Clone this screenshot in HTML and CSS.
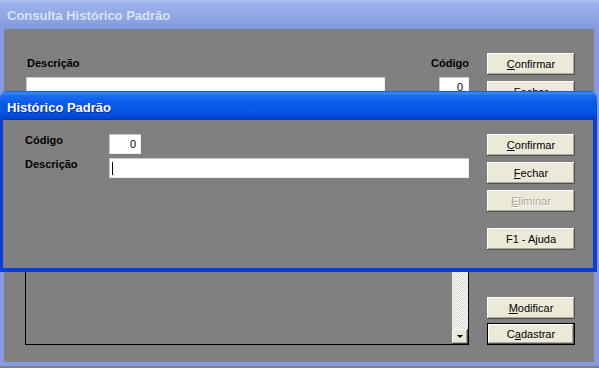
FILE: index.html
```html
<!DOCTYPE html>
<html>
	<head>
		<title>Consulta Histórico Padrão</title>
		<meta charset="utf-8">
		<link rel="stylesheet" href="styles.css">
	</head>

	<body>
		<!-- janela de fundo (inativa) -->
		<div class="window inactive">
			<div class="titlebar"><span>Consulta Histórico Padrão</span></div>
			<div class="client">
				<div class="main-col">
					<div class="label-row">
						<span class="lbl">Descrição</span>
						<span class="lbl">Código</span>
					</div>
					<div class="input-row">
						<div class="field desc-bg"></div>
						<div class="field code-bg">0</div>
					</div>
					<div class="list">
						<div class="scrollbar">
							<div class="scroll-down"><span class="tri"></span></div>
						</div>
					</div>
				</div>
				<div class="btn-col">
					<span class="btn"><u>C</u>onfirmar</span>
					<span class="btn"><u>F</u>echar</span>
					<span class="spacer"></span>
					<span class="btn"><u>M</u>odificar</span>
					<span class="btn default">C<u>a</u>dastrar</span>
				</div>
			</div>
		</div>

		<!-- dialogo ativo por cima -->
		<div class="window dialog">
			<div class="titlebar"><span>Histórico Padrão</span></div>
			<div class="client">
				<div class="form">
					<div class="row">
						<span class="lbl">Código</span>
						<div class="field code-sm">0</div>
					</div>
					<div class="row">
						<span class="lbl">Descrição</span>
						<div class="field desc-lg"><span class="caret"></span></div>
					</div>
				</div>
				<div class="btn-col">
					<span class="btn"><u>C</u>onfirmar</span>
					<span class="btn"><u>F</u>echar</span>
					<span class="btn disabled"><u>E</u>liminar</span>
					<span class="btn help">F1 - Ajuda</span>
				</div>
			</div>
		</div>
	</body>
</html>
```

FILE: styles.css
```css
* {
	box-sizing: border-box;
}

body {
	margin: 0;
	width: 599px;
	height: 368px;
	overflow: hidden;
	position: relative;
	background: #808080;
	font: 11px "Liberation Sans", Arial, sans-serif;
	color: #000;
}

.window {
	display: flex;
	flex-direction: column;
}

.titlebar {
	height: 29px;
	flex: none;
	display: flex;
	align-items: center;
	padding-left: 7px;
	font: bold 13px "Liberation Sans", Arial, sans-serif;
	line-height: 15px;
}

.client {
	flex: 1;
	display: flex;
	background: #808080;
	border-style: solid;
}

/* janela inativa */
.inactive {
	width: 599px;
	height: 366px;
}

.inactive .titlebar {
	padding-top: 2px;
	color: #d8e2f6;
	background: linear-gradient(180deg, #b0c2f2 0%, #9bb1ea 15%, #8fa6e5 60%, #8098dd 100%);
}

.inactive .client {
	border-color: #8799e2;
	border-width: 0 5px 4px 4px;
	padding: 24px 0 0 21px;
}

.main-col {
	width: 444px;
	padding-top: 4px;
	display: flex;
	flex-direction: column;
}

.label-row {
	display: flex;
	justify-content: space-between;
	height: 13px;
	line-height: 13px;
	padding-left: 2px;
}

.lbl {
	font-weight: bold;
	line-height: 13px;
}

.input-row {
	display: flex;
	justify-content: space-between;
	margin-top: 7px;
	padding-left: 1px;
}

.field {
	height: 20px;
	line-height: 20px;
	background: #fff;
	box-shadow: inset 1px 1px #c8c8c8, inset -1px -1px #ececec;
	text-align: right;
	padding-right: 5px;
}

.desc-bg {
	width: 359px;
}

.code-bg {
	width: 30px;
	padding-right: 6px;
}

.list {
	flex: 1;
	margin: 6px 0 17px;
	border: 1px solid #000;
	display: flex;
	justify-content: flex-end;
}

.scrollbar {
	width: 16px;
	display: flex;
	flex-direction: column;
	justify-content: flex-end;
	background: repeating-conic-gradient(#ffffff 0 25%, #d6d3c8 0 50%) 0 0 / 2px 2px;
}

.scroll-down {
	height: 15px;
	background: #ece9d8;
	box-shadow: inset -1px -1px #404040, inset 1px 1px #fff, inset -2px -2px #aca899;
	display: flex;
	align-items: center;
	justify-content: center;
}

.tri {
	width: 0;
	height: 0;
	border-left: 3px solid transparent;
	border-right: 3px solid transparent;
	border-top: 3px solid #000;
}

.btn-col {
	margin-left: 18px;
	display: flex;
	flex-direction: column;
	gap: 6px;
	padding-bottom: 17px;
}

.spacer {
	flex: 1;
}

.btn {
	width: 88px;
	height: 22px;
	line-height: 22px;
	text-align: center;
	background: #ece9d8;
	box-shadow: inset -1px -1px #55534c, inset 1px 1px #fff, inset -2px -2px #aca899;
	cursor: pointer;
}

.btn.default {
	margin-top: -2px;
	border: 1px solid #000;
	line-height: 20px;
}

.btn.disabled {
	color: #aca899;
	text-shadow: 1px 1px #fff;
}

.btn.help {
	margin-top: 10px;
}

/* dialogo ativo */
.dialog {
	position: absolute;
	left: 0;
	top: 91px;
	width: 597px;
	height: 181px;
}

.dialog .titlebar {
	padding-top: 4px;
	border-radius: 7px 7px 0 0;
	color: #fff;
	text-shadow: 1px 1px #0a2a9c;
	background: linear-gradient(180deg, #0a50dc 0%, #3a8cfa 6%, #1a6cf2 16%, #0a5ae8 40%, #0556e6 70%, #0348d6 90%, #0238b8 100%);
}

.dialog .client {
	border-color: #0b3ddc;
	border-width: 0 4px 4px 3px;
	padding: 14px 0 0 22px;
}

.form {
	width: 444px;
	display: flex;
	flex-direction: column;
	gap: 4px;
}

.row {
	display: flex;
}

.row .lbl {
	width: 84px;
}

.code-sm {
	width: 32px;
}

.desc-lg {
	width: 360px;
	text-align: left;
	padding: 4px 0 0 3px;
}

.caret {
	display: block;
	width: 1px;
	height: 13px;
	background: #000;
}
```
